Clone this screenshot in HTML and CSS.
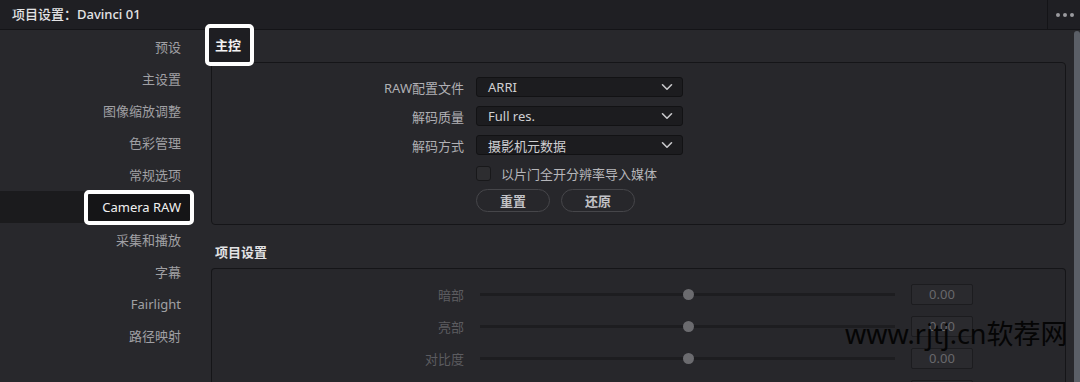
FILE: index.html
```html
<!DOCTYPE html>
<html lang="zh-CN">
<head>
<meta charset="utf-8">
<title>项目设置</title>
<link rel="stylesheet" href="styles.css">
</head>
<body>
<div class="window">
  <header class="titlebar">
    <div class="title">项目设置：Davinci 01</div>
    <div class="menu"><span class="dot"></span><span class="dot"></span><span class="dot"></span></div>
  </header>
  <div class="content">
    <nav class="sidebar">
      <div class="nav-item">预设</div>
      <div class="nav-item">主设置</div>
      <div class="nav-item">图像缩放调整</div>
      <div class="nav-item">色彩管理</div>
      <div class="nav-item">常规选项</div>
      <div class="nav-item active"><span class="mark-box">Camera RAW</span></div>
      <div class="nav-item">采集和播放</div>
      <div class="nav-item">字幕</div>
      <div class="nav-item">Fairlight</div>
      <div class="nav-item">路径映射</div>
    </nav>
    <main class="main">
      <div class="section-head first"><span class="mark-head">主控</span></div>
      <section class="panel panel-master">
        <div class="form-row">
          <label class="label">RAW配置文件</label>
          <div class="select"><span>ARRI</span><svg class="chev" width="12" height="8" viewBox="0 0 12 8"><path d="M1.5 1.8 6 6.2 10.5 1.8" fill="none" stroke="#c9c9cc" stroke-width="1.6" stroke-linecap="round" stroke-linejoin="round"/></svg></div>
        </div>
        <div class="form-row">
          <label class="label">解码质量</label>
          <div class="select"><span>Full res.</span><svg class="chev" width="12" height="8" viewBox="0 0 12 8"><path d="M1.5 1.8 6 6.2 10.5 1.8" fill="none" stroke="#c9c9cc" stroke-width="1.6" stroke-linecap="round" stroke-linejoin="round"/></svg></div>
        </div>
        <div class="form-row">
          <label class="label">解码方式</label>
          <div class="select"><span>摄影机元数据</span><svg class="chev" width="12" height="8" viewBox="0 0 12 8"><path d="M1.5 1.8 6 6.2 10.5 1.8" fill="none" stroke="#c9c9cc" stroke-width="1.6" stroke-linecap="round" stroke-linejoin="round"/></svg></div>
        </div>
        <div class="form-row check-row">
          <span class="label"></span>
          <div class="check"><span class="box"></span><span class="check-text">以片门全开分辨率导入媒体</span></div>
        </div>
        <div class="form-row btn-row">
          <span class="label"></span>
          <div class="buttons"><button class="btn">重置</button><button class="btn">还原</button></div>
        </div>
      </section>
      <div class="section-head second"><span class="head-text">项目设置</span></div>
      <section class="panel panel-project">
        <div class="slider-row">
          <span class="label dim">暗部</span>
          <div class="track"><span class="thumb"></span></div>
          <div class="value">0.00</div>
        </div>
        <div class="slider-row">
          <span class="label dim">亮部</span>
          <div class="track"><span class="thumb"></span></div>
          <div class="value">0.00</div>
        </div>
        <div class="slider-row">
          <span class="label dim">对比度</span>
          <div class="track"><span class="thumb"></span></div>
          <div class="value">0.00</div>
        </div>
        <div class="slider-row">
          <span class="label dim"></span>
          <div class="track"><span class="thumb"></span></div>
          <div class="value"></div>
        </div>
      </section>
    </main>
    <div class="scrollbar"></div>
  </div>
  <div class="watermark">www.rjtj.cn软荐网</div>
</div>
</body>
</html>
```

FILE: styles.css
```css
* { box-sizing: border-box; }
html, body { margin: 0; padding: 0; }
body {
  width: 1080px;
  height: 382px;
  overflow: hidden;
  background: #28282c;
  font-family: "Noto Sans", "Noto Sans CJK SC", sans-serif;
  font-size: 13px;
  color: #a2a2a6;
}
.window {
  position: relative;
  width: 1080px;
  height: 382px;
  display: flex;
  flex-direction: column;
}
.titlebar {
  height: 30px;
  flex: none;
  display: flex;
  align-items: stretch;
  background: #1f1f23;
  border-bottom: 1px solid #141417;
}
.title {
  flex: 1;
  padding-left: 12px;
  line-height: 29px;
  color: #e4e4e6;
  font-weight: 500;
  font-size: 13px;
}
.menu {
  width: 33px;
  border-left: 1px solid #141417;
  display: flex;
  align-items: center;
  justify-content: center;
  gap: 3px;
  padding-left: 2px;
}
.dot {
  width: 4px;
  height: 4px;
  border-radius: 50%;
  background: #9a9a9e;
}
.content {
  flex: 1;
  display: flex;
  min-height: 0;
}
.sidebar {
  width: 210px;
  flex: none;
  padding-top: 0;
  display: flex;
  flex-direction: column;
}
.nav-item {
  height: 32.2px;
  display: flex;
  align-items: center;
  justify-content: flex-end;
  padding-right: 29px;
  color: #a0a0a4;
  white-space: nowrap;
}
.nav-item.active {
  background: linear-gradient(to right, #1b1b1d 0, #1b1b1d 190px, transparent 190px);
  padding-right: 20px;
}
.mark-box {
  position: relative;
  z-index: 2;
  display: inline-block;
  line-height: 27px;
  padding: 0 9px 0 14px;
  background: #151517;
  color: #f0f0f0;
  outline: 4px solid #ffffff;
  border-radius: 1px;
}
.main {
  flex: 1;
  padding-left: 1px;
  padding-right: 8px;
  display: flex;
  flex-direction: column;
  min-width: 0;
}
.section-head {
  flex: none;
  display: flex;
  align-items: center;
}
.section-head.first {
  height: 32px;
}
.mark-head {
  position: relative;
  z-index: 2;
  display: inline-block;
  margin-left: -2px;
  margin-top: -2px;
  line-height: 34px;
  padding: 0 9px 0 6px;
  background: #1e1e22;
  color: #f2f2f2;
  font-weight: 700;
  outline: 4px solid #ffffff;
  border-radius: 1px;
}
.section-head.second {
  padding: 17px 0 6px 4px;
}
.head-text {
  line-height: 20px;
  color: #e2e2e4;
  font-weight: 700;
}
.panel {
  border: 1px solid #151518;
  border-radius: 4px;
  background: #27272b;
}
.panel-master {
  height: 163px;
  flex: none;
  padding-top: 14px;
  display: flex;
  flex-direction: column;
  gap: 9px;
}
.form-row {
  display: flex;
  align-items: center;
  height: 20px;
  gap: 12px;
}
.label {
  width: 252px;
  flex: none;
  text-align: right;
  color: #b0b0b4;
  white-space: nowrap;
}
.label.dim { color: #5c5c60; }
.select {
  width: 207px;
  height: 20px;
  display: flex;
  align-items: center;
  justify-content: space-between;
  padding: 0 9px 0 11px;
  background: #1c1c1f;
  border: 1px solid #121214;
  border-radius: 3px;
  color: #cfcfd2;
}
.check-row { height: 16px; margin-top: 1px; }
.check {
  display: flex;
  align-items: center;
  gap: 10px;
}
.box {
  width: 15px;
  height: 15px;
  border-radius: 3px;
  background: #2d2d30;
  border: 1px solid #18181a;
}
.check-text { color: #b6b6ba; }
.btn-row { height: 23px; margin-top: -1px; }
.buttons {
  display: flex;
  gap: 11px;
}
.btn {
  width: 74px;
  height: 23px;
  border-radius: 12px;
  border: 1px solid #46464a;
  background: transparent;
  color: #c2c2c6;
  font-family: "Noto Sans", "Noto Sans CJK SC", sans-serif;
  font-size: 13px;
  font-weight: 600;
  padding: 0;
}
.panel-project {
  flex: 1;
  padding-top: 9px;
  border-bottom: none;
  border-radius: 4px 4px 0 0;
}
.slider-row {
  height: 32px;
  display: flex;
  align-items: center;
}
.track {
  position: relative;
  margin-left: 16px;
  width: 415px;
  height: 3px;
  background: #1d1d20;
}
.thumb {
  position: absolute;
  left: 203px;
  top: -4px;
  width: 11px;
  height: 11px;
  border-radius: 50%;
  background: #6b6b6f;
}
.value {
  margin-left: 16px;
  width: 62px;
  height: 21px;
  line-height: 19px;
  text-align: center;
  background: #2a2a2e;
  border: 1px solid #1c1c1f;
  border-radius: 2px;
  color: #68686c;
}
.scrollbar {
  width: 6px;
  flex: none;
  margin-top: 1px;
  background: #5b5f67;
  border-radius: 3px 3px 0 0;
}
.watermark {
  position: absolute;
  left: 845px;
  top: 314px;
  font-family: "Noto Sans", "Noto Sans CJK SC", sans-serif;
  font-size: 27px;
  line-height: 40px;
  color: #050505;
  white-space: nowrap;
  z-index: 5;
}
```
